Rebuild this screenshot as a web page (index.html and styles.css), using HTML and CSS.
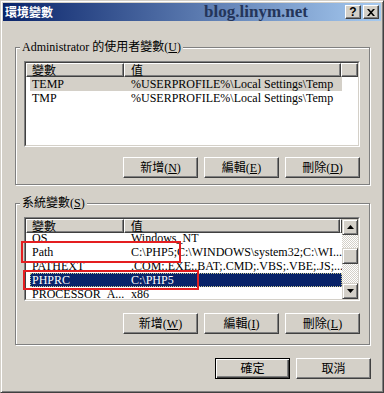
FILE: index.html
```html
<!DOCTYPE html>
<html>
<head>
<meta charset="utf-8">
<link rel="stylesheet" href="styles.css">
</head>
<body>
<div class="window">
  <div class="titlebar">
    <span class="title">環境變數</span>
    <span class="watermark">blog.linym.net</span>
    <div class="tbtns">
      <span class="tbtn help">?</span>
      <span class="tbtn close"><svg width="8" height="7" viewBox="0 0 8 7"><path d="M0 0h2l2 2.2L6 0h2L5 3.5 8 7H6L4 4.8 2 7H0l3-3.5z" fill="#000"/></svg></span>
    </div>
  </div>
  <div class="body">
    <fieldset class="group g1">
      <legend>Administrator 的使用者變數(<u>U</u>)</legend>
      <div class="list l1">
        <div class="list-in">
          <div class="main">
            <div class="header"><span class="hc c1">變數</span><span class="hc c2">值</span><span class="hc c3"></span></div>
            <div class="rows">
              <div class="row sel-gray"><span class="cell">TEMP</span><span class="cell v">%USERPROFILE%\Local Settings\Temp</span></div>
              <div class="row"><span class="cell">TMP</span><span class="cell v">%USERPROFILE%\Local Settings\Temp</span></div>
            </div>
          </div>
        </div>
      </div>
      <div class="btnrow">
        <button class="btn">新增(<u>N</u>)</button>
        <button class="btn">編輯(<u>E</u>)</button>
        <button class="btn">刪除(<u>D</u>)</button>
      </div>
    </fieldset>

    <fieldset class="group g2">
      <legend>系統變數(<u>S</u>)</legend>
      <div class="list l2">
        <div class="list-in">
          <div class="main">
            <div class="header"><span class="hc c1">變數</span><span class="hc c2">值</span><span class="hc c3"></span></div>
            <div class="rows">
              <div class="scroller">
                <div class="row"><span class="cell">OS</span><span class="cell v">Windows_NT</span></div>
                <div class="row"><span class="cell">Path</span><span class="cell v">C:\PHP5;C:\WINDOWS\system32;C:\WI...</span></div>
                <div class="row"><span class="cell">PATHEXT</span><span class="cell v">.COM;.EXE;.BAT;.CMD;.VBS;.VBE;.JS;...</span></div>
                <div class="row sel"><span class="cell">PHPRC</span><span class="cell v">C:\PHP5</span></div>
                <div class="row"><span class="cell">PROCESSOR_A...</span><span class="cell v">x86</span></div>
                <div class="row"><span class="cell">PROCESSOR_I...</span><span class="cell v">x86 Family 6 Model 8 Stepping 3, GenuineIntel</span></div>
              </div>
            </div>
          </div>
          <div class="scrollbar">
            <span class="sbtn"><svg width="7" height="4" viewBox="0 0 7 4"><path d="M3.5 0L7 4H0z" fill="#000"/></svg></span>
            <div class="track"><span class="thumb"></span></div>
            <span class="sbtn"><svg width="7" height="4" viewBox="0 0 7 4"><path d="M0 0h7L3.5 4z" fill="#000"/></svg></span>
          </div>
        </div>
      </div>
      <div class="btnrow">
        <button class="btn">新增(<u>W</u>)</button>
        <button class="btn">編輯(<u>I</u>)</button>
        <button class="btn">刪除(<u>L</u>)</button>
      </div>
    </fieldset>

    <div class="btnrow dlg">
      <button class="btn default">確定</button>
      <button class="btn">取消</button>
    </div>
  </div>
  <div class="mark m1"></div>
  <div class="mark m2"></div>
</div>
</body>
</html>
```

FILE: styles.css
```css
html, body {
  margin: 0;
  padding: 0;
  background: #d4d0c8;
}

.window {
  position: relative;
  width: 384px;
  height: 393px;
  box-sizing: border-box;
  background: #d4d0c8;
  border: 1px solid;
  border-color: #d4d0c8 #404040 #404040 #d4d0c8;
  box-shadow: inset 1px 1px #fff, inset -1px -1px #808080;
  padding: 2px;
  font-family: "Liberation Serif", "Noto Sans CJK TC", serif;
  font-size: 12px;
  color: #000;
}

.titlebar {
  height: 18px;
  display: flex;
  align-items: center;
  background: linear-gradient(to right, #0a246a, #a6caf0);
}

.title {
  padding-left: 2px;
  font-family: "Noto Sans CJK TC", sans-serif;
  font-weight: bold;
  font-size: 12px;
  line-height: 14px;
  color: #fff;
}

.watermark {
  margin-left: auto;
  margin-right: 37px;
  font-family: "Liberation Serif", serif;
  font-weight: bold;
  font-size: 17px;
  line-height: 18px;
  color: #24355a;
}

.tbtns {
  display: flex;
  gap: 2px;
  margin-right: 2px;
}

.tbtn {
  width: 16px;
  height: 14px;
  box-sizing: border-box;
  display: flex;
  align-items: center;
  justify-content: center;
  background: #d4d0c8;
  border: 1px solid;
  border-color: #fff #404040 #404040 #fff;
  box-shadow: inset -1px -1px #808080;
}

.help {
  font-family: "Liberation Sans", sans-serif;
  font-weight: bold;
  font-size: 12px;
  line-height: 12px;
}

.body {
  display: flex;
  flex-direction: column;
}

.group {
  margin: 0 0 0 12px;
  width: 355px;
  box-sizing: border-box;
  min-inline-size: 0;
  border: 1px solid #808080;
  box-shadow: inset 1px 1px #fff, 1px 1px #fff;
  display: flex;
  flex-direction: column;
}

.group legend {
  margin-left: -4px;
  padding: 0 2px;
  line-height: 12px;
  height: 12px;
  background: #d4d0c8;
  white-space: nowrap;
}

.g1 {
  margin-top: 20px;
  padding: 8px 9px 6px 8px;
}

.g2 {
  margin-top: 12px;
  padding: 8px 9px 10px 8px;
}

.list {
  box-sizing: border-box;
  border: 1px solid;
  border-color: #808080 #fff #fff #808080;
}

.l1 { height: 86px; margin-bottom: 10px; }
.l2 { height: 84px; margin-bottom: 12px; }

.list-in {
  height: 100%;
  box-sizing: border-box;
  border: 1px solid;
  border-color: #404040 #d4d0c8 #d4d0c8 #404040;
  background: #fff;
  display: flex;
  overflow: hidden;
}

.main {
  flex: 1;
  min-width: 0;
  display: flex;
  flex-direction: column;
}

.header {
  display: flex;
  height: 14px;
  flex: none;
  position: relative;
  z-index: 1;
}

.hc {
  box-sizing: border-box;
  height: 14px;
  display: flex;
  align-items: center;
  background: #d4d0c8;
  border: 1px solid;
  border-color: #fff #404040 #404040 #fff;
  box-shadow: inset -1px -1px #808080;
  font-family: "Noto Sans CJK TC", sans-serif;
  font-size: 12px;
  line-height: 12px;
  white-space: nowrap;
}

.c1 { width: 98px; padding-left: 5px; }
.c2 { width: 217px; padding-left: 6px; }
.c3 { flex: 1; min-width: 0; }

.rows {
  flex: 1;
  overflow: hidden;
}

.scroller {
  margin-top: -2px;
}

.row {
  display: grid;
  grid-template-columns: 94px 218px;
  width: 312px;
  margin-left: 4px;
  height: 14px;
  line-height: 14px;
  box-sizing: border-box;
}

.cell {
  white-space: nowrap;
  overflow: hidden;
  padding-left: 2px;
}

.cell.v {
  padding-left: 7px;
}

.sel-gray {
  background: #d4d0c8;
}

.sel {
  background: #0a246a;
  color: #fff;
  outline: 1px dotted #c8c890;
  outline-offset: -1px;
}

.scrollbar {
  width: 16px;
  flex: none;
  display: flex;
  flex-direction: column;
}

.sbtn {
  width: 16px;
  height: 16px;
  box-sizing: border-box;
  display: flex;
  align-items: center;
  justify-content: center;
  background: #d4d0c8;
  border: 1px solid;
  border-color: #d4d0c8 #404040 #404040 #d4d0c8;
  box-shadow: inset 1px 1px #fff, inset -1px -1px #808080;
  flex: none;
}

.track {
  flex: 1;
  background: repeating-conic-gradient(#d4d0c8 0 25%, #fff 0 50%) 0 0 / 2px 2px;
}

.thumb {
  display: block;
  margin-top: 13px;
  width: 16px;
  height: 16px;
  box-sizing: border-box;
  background: #d4d0c8;
  border: 1px solid;
  border-color: #d4d0c8 #404040 #404040 #d4d0c8;
  box-shadow: inset 1px 1px #fff, inset -1px -1px #808080;
}

.btnrow {
  display: flex;
  justify-content: flex-end;
  gap: 6px;
}

.btn {
  width: 75px;
  height: 21px;
  box-sizing: border-box;
  padding: 0;
  margin: 0;
  background: #d4d0c8;
  border: 1px solid;
  border-color: #fff #404040 #404040 #fff;
  box-shadow: inset -1px -1px #808080;
  font-family: "Liberation Serif", "Noto Sans CJK TC", serif;
  font-size: 12px;
  line-height: 12px;
  color: #000;
}

.btn.default {
  border: 1px solid #000;
  box-shadow: inset 1px 1px #fff, inset -1px -1px #404040, inset -2px -2px #808080;
}

.dlg {
  margin-top: 13px;
  margin-right: 10px;
}

.mark {
  position: absolute;
  box-sizing: border-box;
  border: 2px solid #e41e20;
}

.m1 {
  left: 20px;
  top: 240px;
  width: 160px;
  height: 22px;
}

.m2 {
  left: 22px;
  top: 269px;
  width: 176px;
  height: 20px;
}
```
